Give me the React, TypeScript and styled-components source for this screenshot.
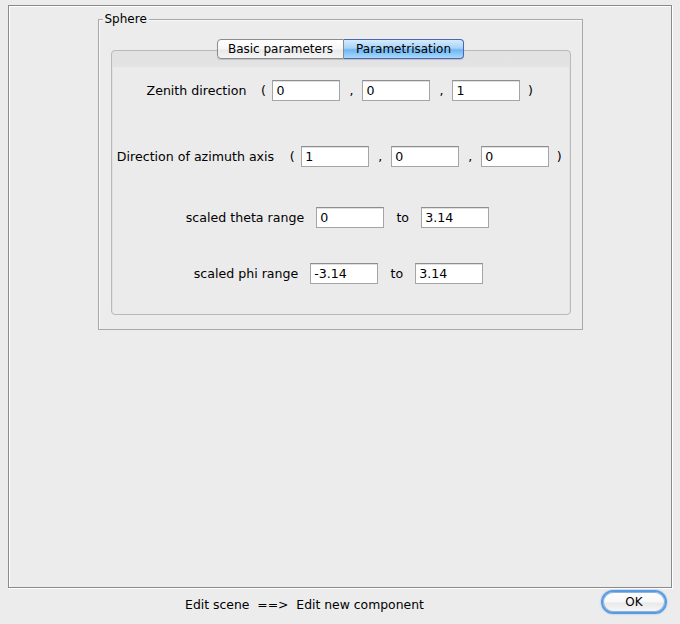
import { FC } from 'react';
import styled, { createGlobalStyle } from 'styled-components';

const GlobalStyle = createGlobalStyle`
	html, body {
		margin: 0;
		padding: 0;
		background: #ececec;
	}
	body {
		font-family: "DejaVu Sans", "Liberation Sans", sans-serif;
		font-size: 12px;
		color: #000;
	}
`;

const Window = styled.div`
	width: 680px;
	height: 624px;
	display: flex;
	flex-direction: column;
	background: #ececec;
	overflow: hidden;
`;

const Frame = styled.div`
	margin: 5px 8px 0 8px;
	height: 581px;
	border: 1px solid #8a8a8a;
	box-shadow: 1px 1px 0 #ffffff, inset 1px 1px 0 #ffffff;
	display: flex;
	flex-direction: column;
	align-items: center;
`;

const GroupBox = styled.div`
	position: relative;
	margin-top: 13px;
	border: 1px solid #a8a8a8;
	box-shadow: inset 1px 1px 0 #f8f8f8;
	padding: 19px 11px 0 12px;
	box-sizing: border-box;
	width: 485px;
	height: 311px;
`;

const GroupTitle = styled.span`
	position: absolute;
	top: -9px;
	left: 4px;
	padding: 0 2px 0 2px;
	background: #ececec;
	line-height: 16px;
	font-size: 12px;
`;

const TabBar = styled.div`
	display: flex;
	justify-content: center;
	position: relative;
	z-index: 1;
	height: 20px;
	margin-bottom: -9px;
`;

const Tab = styled.div<{ $active?: boolean; $first?: boolean }>`
	height: 18px;
	line-height: 18px;
	padding: 0 ${p => (p.$active ? 12 : 10)}px;
	font-size: 12px;
	border: 1px solid ${p => (p.$active ? '#4f63b5' : '#8c8c8c')};
	border-left-width: ${p => (p.$first ? '1px' : '0')};
	border-radius: ${p => (p.$first ? '4px 0 0 4px' : '0 4px 4px 0')};
	background: ${p =>
		p.$active
			? 'linear-gradient(#d5ecfd 0%, #a6d3f8 45%, #6fb6f2 55%, #a8dafd 100%)'
			: 'linear-gradient(#ffffff 0%, #f7f7f7 50%, #e9e9e9 55%, #f4f4f4 100%)'};
	box-shadow: 0 1px 1px rgba(0, 0, 0, 0.15);
`;

const Panel = styled.div`
	height: 265px;
	border: 1px solid #b9b9b9;
	border-radius: 4px;
	background: linear-gradient(#e2e2e2 0px, #e3e3e3 16px, #ebebeb 16px, #ebebeb 100%);
	box-shadow: inset 1px 0 0 #e2e2e2, inset -1px 0 0 #e2e2e2;
	display: flex;
	flex-direction: column;
	padding-top: 29px;
	box-sizing: border-box;
	font-size: 12.6px;
`;

const Row = styled.div<{ $top?: number; $shift?: number }>`
	display: flex;
	align-items: center;
	justify-content: center;
	height: 21px;
	margin-top: ${p => p.$top ?? 0}px;
	margin-left: ${p => p.$shift ?? 0}px;
`;

const Label = styled.span<{ $gap?: number }>`
	margin-right: ${p => p.$gap ?? 12}px;
	white-space: nowrap;
`;

const Sep = styled.span<{ $w: number }>`
	width: ${p => p.$w}px;
	text-align: center;
`;

const Field = styled.div`
	width: 68px;
	height: 21px;
	box-sizing: border-box;
	border: 1px solid #a5a5a5;
	border-top-color: #8e8e8e;
	background: #ffffff;
	padding: 0 3px;
	line-height: 19px;
	box-shadow: inset 0 1px 0 #e0e0e0;
`;

const Spacer = styled.div`
	flex: 1;
`;

const Footer = styled.div`
	display: flex;
	align-items: flex-start;
	height: 36px;
	padding-top: 2px;
	box-sizing: border-box;
`;

const Status = styled.div`
	flex: 1;
	text-align: center;
	white-space: pre;
	padding-left: 8px;
	margin-top: 7px;
	font-size: 12.4px;
`;

const OkButton = styled.button`
	width: 66px;
	height: 24px;
	margin-right: 13px;
	border: 2px solid #5a9be0;
	border-radius: 12px;
	background: linear-gradient(#ffffff 0%, #f7f7f7 50%, #e9e9e9 55%, #f8f8f8 100%);
	box-shadow: 0 0 2px #7fb6ee, inset 0 0 0 1px #8fb4dc;
	font-family: "DejaVu Sans", "Liberation Sans", sans-serif;
	font-size: 12px;
	color: #000;
	padding: 0;
`;

const VectorRow: FC<{ label: string; values: string[]; top: number; shift?: number; gap?: number }> = ({
	label,
	values,
	top,
	shift,
	gap = 8,
}) => (
	<Row $top={top} $shift={shift}>
		<Label $gap={gap}>{label}</Label>
		<Sep $w={18}>(</Sep>
		<Field>{values[0]}</Field>
		<Sep $w={22}>,</Sep>
		<Field>{values[1]}</Field>
		<Sep $w={22}>,</Sep>
		<Field>{values[2]}</Field>
		<Sep $w={20}>)</Sep>
	</Row>
);

const RangeRow: FC<{ label: string; from: string; to: string; top: number; shift?: number }> = ({
	label,
	from,
	to,
	top,
	shift,
}) => (
	<Row $top={top} $shift={shift}>
		<Label>{label}</Label>
		<Field>{from}</Field>
		<Sep $w={37}>to</Sep>
		<Field>{to}</Field>
	</Row>
);

const App: FC = () => {
	return (
		<>
			<GlobalStyle />
			<Window>
				<Frame>
					<GroupBox>
						<GroupTitle>Sphere</GroupTitle>
						<TabBar>
							<Tab $first>Basic parameters</Tab>
							<Tab $active>Parametrisation</Tab>
						</TabBar>
						<Panel>
							<VectorRow label="Zenith direction" values={['0', '0', '1']} top={0} shift={6} />
							<VectorRow label="Direction of azimuth axis" values={['1', '0', '0']} top={45} shift={5} gap={9} />
							<RangeRow label="scaled theta range" from="0" to="3.14" top={40} shift={-6} />
							<RangeRow label="scaled phi range" from="-3.14" to="3.14" top={35} shift={-4} />
						</Panel>
					</GroupBox>
					<Spacer />
				</Frame>
				<Footer>
					<Status>{'Edit scene  ==>  Edit new component'}</Status>
					<OkButton>OK</OkButton>
				</Footer>
			</Window>
		</>
	);
};

export default App;
